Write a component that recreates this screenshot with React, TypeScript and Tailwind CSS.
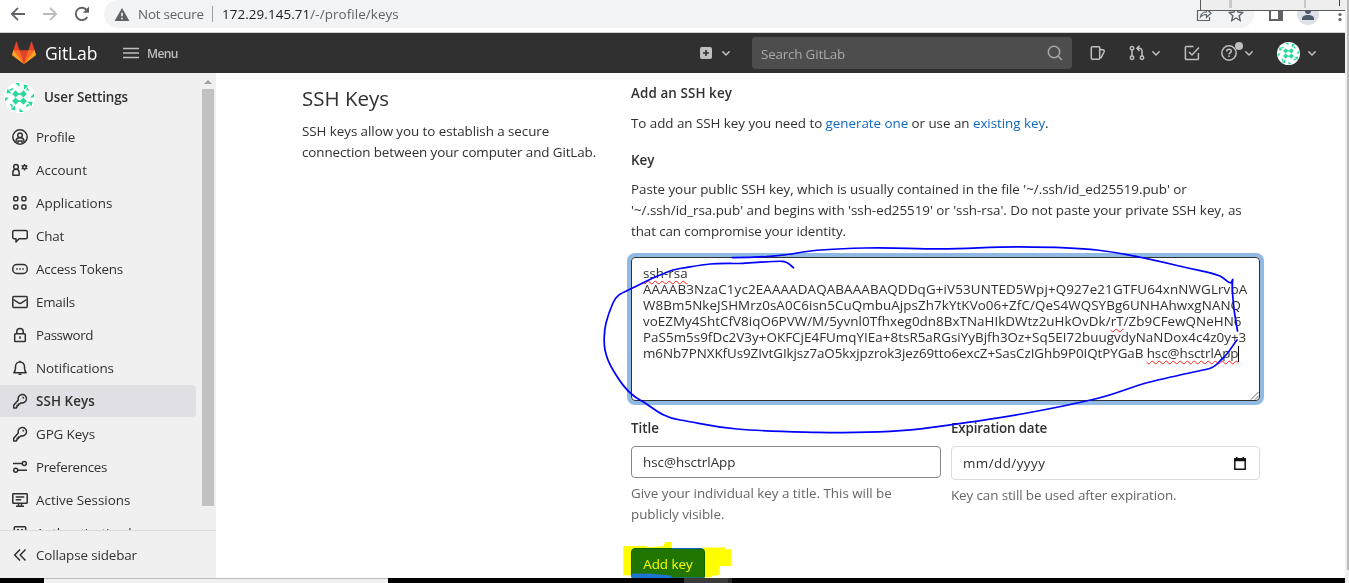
import React from "react";

type IconProps = { children: React.ReactNode; className?: string };

function Icon({ children, className = "size-4" }: IconProps) {
  return (
    <svg viewBox="0 0 16 16" fill="none" stroke="currentColor" strokeWidth="1.5" className={`${className} shrink-0`}>
      {children}
    </svg>
  );
}

function Chevron({ className = "" }: { className?: string }) {
  return (
    <svg viewBox="0 0 8 5" className={`h-[5px] w-2 shrink-0 ${className}`} fill="none" stroke="#bfbfbf" strokeWidth="1.5" strokeLinecap="round" strokeLinejoin="round">
      <path d="M.8.8 4 4 7.2.8" />
    </svg>
  );
}

function Identicon({ className }: { className: string }) {
  return (
    <svg viewBox="0 0 32 32" className={`shrink-0 rounded-full bg-white ${className}`}>
      <g fill="#28d99a">
        <path d="M12 8.6 15.6 12.4 12 16 8.4 12.4zM20 8.6 23.6 12.4 20 16 16.4 12.4zM12 16l3.6 3.6L12 23.4 8.4 19.6zM20 16l3.6 3.6L20 23.4 16.4 19.6z" />
        <rect x="14" y="11.5" width="4" height="1.6" />
        <rect x="14" y="19" width="4" height="1.6" />
        {[0, 90, 180, 270].map((angle) => (
          <g key={angle} transform={`rotate(${angle} 16 16)`}>
            <path d="M11.500 1h4.500v4zM20.500 2.500l4.500 1-4.500 4.500zM4 8.500 9.500 6 8.500 9z" />
          </g>
        ))}
      </g>
    </svg>
  );
}

function Tanuki() {
  return (
    <svg viewBox="0 0 36 36" className="size-6 shrink-0">
      <path fill="#e24329" d="M2 14l9.38 9v-9l-4-12.28c-.205-.632-1.176-.632-1.38 0z" />
      <path fill="#e24329" d="M34 14l-9.38 9v-9l4-12.28c.205-.632 1.176-.632 1.38 0z" />
      <path fill="#e24329" d="M18 34.38 3 14h30z" />
      <path fill="#fc6d26" d="M18 34.38 11.38 14H2l4 11z" />
      <path fill="#fc6d26" d="M18 34.38 24.62 14H34l-4 11z" />
      <path fill="#fca326" d="M2 14 .1 20.16c-.18.565 0 1.2.5 1.56l17.42 12.66z" />
      <path fill="#fca326" d="m34 14 1.9 6.16c.18.565 0 1.2-.5 1.56L18 34.38z" />
    </svg>
  );
}

const keyIcon = (
  <>
    <path d="M6.3 6.9A4.2 4.2 0 1 1 9.1 9.7L7.7 11H6.4v1.5H5V14l-.8.9H1.7v-2.7z" strokeLinejoin="round" />
    <circle cx="11.3" cy="4.7" r=".9" fill="currentColor" stroke="none" />
  </>
);

const items = [
  {
    label: "Profile",
    text: "tracking-[-0.2px]",
    icon: (
      <>
        <circle cx="8" cy="8" r="7.2" />
        <circle cx="8" cy="6.2" r="2.3" />
        <path d="M4 13.6v-1.4C4 10 5.6 8.7 8 8.7s4 1.3 4 3.5v1.4M6 14v-2h4v2" />
      </>
    ),
  },
  {
    label: "Account",
    text: "tracking-[0.06px]",
    icon: (
      <>
        <circle cx="4" cy="4.9" r="2.3" />
        <path d="M.9 10.5c0-2 1.3-3.2 3.1-3.2s3.1 1.2 3.1 3.2v2.8H.9z" strokeLinejoin="round" />
        <circle cx="12.5" cy="5.3" r="1.7" />
        <path d="M12.5 2v1.5M12.5 7.1v1.5M9.6 3.6l1.3.8M14.1 6.2l1.3.8M9.6 7l1.3-.8M14.1 4.4l1.3-.8" strokeWidth="1.3" />
      </>
    ),
  },
  {
    label: "Applications",
    text: "",
    icon: (
      <>
        <rect x="1.8" y="1.8" width="4" height="4" rx="1" />
        <rect x="9.9" y="1.8" width="4" height="4" rx="1" />
        <rect x="1.8" y="9.9" width="4" height="4" rx="1" />
        <rect x="9.9" y="9.9" width="4" height="4" rx="1" />
      </>
    ),
  },
  {
    label: "Chat",
    text: "tracking-[-0.2px]",
    icon: <path d="M2.2 2.5h11.6c.9 0 1.5.6 1.5 1.5v5.2c0 .9-.6 1.5-1.5 1.5H7L4 14v-3.3H2.2C1.3 10.7.7 10.1.7 9.2V4c0-.9.6-1.5 1.5-1.5z" strokeLinejoin="round" />,
  },
  {
    label: "Access Tokens",
    text: "tracking-[-0.2px]",
    icon: (
      <>
        <rect x=".8" y="3.5" width="14.4" height="9" rx="4" />
        <path d="M4.2 8h1.5M7.3 8h1.5M10.3 8h1.5" />
      </>
    ),
  },
  {
    label: "Emails",
    text: "tracking-[-0.25px]",
    icon: (
      <>
        <rect x=".8" y="2.6" width="14.4" height="10.8" rx="1" />
        <path d="m1.500 5.500 5 3.400c.9.6 2.100.6 3 0l5-3.400" />
      </>
    ),
  },
  {
    label: "Password",
    text: "tracking-[-0.42px]",
    icon: (
      <>
        <rect x="2.7" y="6.8" width="10.6" height="7.7" rx=".8" />
        <path d="M4.8 6.8V4.6a3.2 3.2 0 0 1 6.4 0v2.2M8 9.3V12" />
      </>
    ),
  },
  {
    label: "Notifications",
    text: "tracking-[-0.07px]",
    icon: (
      <>
        <path d="M1.8 12.7h12.4c-1.2-1.2-1.7-2.4-1.7-4.4V6.5a4.5 4.5 0 0 0-9 0v1.8c0 2-.5 3.2-1.7 4.4z" strokeLinejoin="round" />
        <path d="M8 2V.8M6.5 14.3h3" />
      </>
    ),
  },
  { label: "SSH Keys", text: "tracking-[0.08px] font-semibold", icon: keyIcon, active: true },
  { label: "GPG Keys", text: "tracking-[-0.1px]", icon: keyIcon },
  {
    label: "Preferences",
    text: "tracking-[-0.33px]",
    icon: (
      <>
        <circle cx="12.3" cy="4.4" r="2" />
        <circle cx="3.7" cy="11.3" r="2" />
        <path d="M1 4.4h9M6 11.3h9" />
      </>
    ),
  },
  {
    label: "Active Sessions",
    text: "",
    icon: (
      <>
        <rect x=".8" y="1.7" width="14.4" height="9.6" rx=".6" />
        <path d="M3.7 5h8.6M3.7 7.7h5.5M4 14.3h8M6.5 11.5v2.5M9.5 11.5v2.5" />
      </>
    ),
  },
  {
    label: "Authentication log",
    text: "tracking-[-0.2px]",
    icon: (
      <>
        <rect x="2.3" y="1.7" width="11.4" height="12.6" rx=".8" />
        <path d="M5 4.8h2M9 4.8h2M5 8h6" />
      </>
    ),
  },
];

function BrowserBar() {
  return (
    <header className="flex h-[33px] shrink-0 items-start overflow-hidden border-b border-[#d2d2d2] bg-white text-[#5f6368]">
      <div className="flex h-7 w-[104px] shrink-0 items-center gap-4 pl-[10px]">
        <Icon className="size-[16px]"><path d="M15 8H2M8 1.8 1.8 8 8 14.2" strokeWidth="1.8" /></Icon>
        <Icon className="size-[16px] text-[#b9bbbe]"><path d="M1 8h13M8 1.8 14.2 8 8 14.2" strokeWidth="1.8" /></Icon>
        <Icon className="size-[16px]"><path d="M13.3 11A6.2 6.2 0 1 1 13 4.3" strokeWidth="1.9" /><path d="M15 .6v6.2H8.8z" fill="currentColor" stroke="none" /></Icon>
      </div>
      <div className="flex h-7 w-[1150px] shrink-0 items-center rounded-full bg-[#f1f3f4] pl-[10px] text-[13.4px]">
        <svg viewBox="0 0 16 14" className="h-[13px] w-4"><path fill="#5f6368" d="M8 0l8 14H0z" /><path stroke="#f1f3f4" strokeWidth="1.7" d="M8 5v4M8 10.5v1.7" /></svg>
        <span className="ml-[8px] w-[66px] whitespace-nowrap tracking-[-0.2px]">Not secure</span>
        <span className="ml-2 h-4 w-px bg-[#9b9ea2]" />
        <span className="ml-[9px] whitespace-nowrap tracking-[0.09px]"><span className="text-[#202124]">172.29.145.71</span>/-/profile/keys</span>
        <div className="ml-auto flex items-center gap-4 pr-[10px]">
          <Icon className="size-4"><path d="M4 4.5H1.5v10h12V11M4.5 11c.5-3.5 2.5-5 6-5V3l4.5 4.3-4.5 4V8.5c-2.5 0-4.5.6-6 2.5z" strokeWidth="1.2" /></Icon>
          <Icon className="size-4"><path d="m8 1.5 2 4.5 4.8.5-3.600 3.200 1 4.800L8 12l-4.200 2.500 1-4.800L1.200 6.500 6 6z" strokeWidth="1.4" /></Icon>
        </div>
      </div>
      <div className="flex h-7 flex-1 items-center pl-[15px]">
        <svg viewBox="0 0 14 14" className="size-[14px] shrink-0"><path d="M1 1h12v12H1z" fill="none" stroke="#5f6368" strokeWidth="2" /><path fill="#5f6368" d="M9 1h4v12H9z" /></svg>
        <svg viewBox="0 0 22 22" className="ml-[14px] size-[22px] shrink-0"><circle cx="11" cy="11" r="11" fill="#dee1e6" /><circle cx="11" cy="8" r="3" fill="#4d5a6d" /><path d="M5 17v-1.500c0-2.500 3-3.500 6-3.500s6 1 6 3.500V17z" fill="#4d5a6d" /></svg>
        <svg viewBox="0 0 4 16" className="ml-[19px] h-4 w-1 shrink-0" fill="#5f6368"><circle cx="2" cy="3" r="1.6" /><circle cx="2" cy="8.5" r="1.6" /><circle cx="2" cy="13.5" r="1.6" /></svg>
      </div>
    </header>
  );
}

function NavBar() {
  return (
    <nav className="flex h-10 shrink-0 items-center bg-[#303030] pl-3 text-[#bfbfbf]">
      <Tanuki />
      <span className="ml-[9px] w-[54px] pt-px whitespace-nowrap text-[17.5px] tracking-[-0.1px] text-white">GitLab</span>
      <svg viewBox="0 0 16 12" className="ml-6 h-3 w-4 shrink-0"><path stroke="#bfbfbf" strokeWidth="1.3" d="M0 1.5h16M0 6h16M0 10.5h16" /></svg>
      <span className="ml-[8px] w-[37px] pt-[2px] whitespace-nowrap text-[12px] font-semibold tracking-[-0.6px]">Menu</span>
      <svg viewBox="0 0 12 12" className="ml-[516px] size-3 shrink-0"><rect width="12" height="12" rx="2" fill="#bfbfbf" /><path d="M6 3v6M3 6h6" stroke="#303030" strokeWidth="1.6" /></svg>
      <Chevron className="ml-[10px]" />
      <div className="ml-[22px] flex h-8 w-[320px] shrink-0 items-center justify-between rounded bg-[#4d4d4d] pr-[9px] pl-[9px] text-[13.4px] tracking-[-0.18px] text-[#a9a9a9]">
        <span className="pt-[2px]">Search GitLab</span>
        <Icon><circle cx="7" cy="7" r="5.7" /><path d="m11 11 4 4" /></Icon>
      </div>
      <Icon className="ml-[18px] size-4"><path d="M1.3 2.7c0-.5.4-.9.9-.9h6.6c.5 0 .9.4.9.9v10.6c0 .5-.4.9-.9.9H2.2c-.5 0-.9-.4-.9-.9zM9.700 4.300l3.600.7c.9.2 1.200.8.9 1.500l-3 6.200H9.700" strokeLinejoin="round" /></Icon>
      <Icon className="ml-[23px] size-4"><circle cx="3" cy="3.2" r="1.7" /><circle cx="3" cy="12.8" r="1.7" /><circle cx="13" cy="12.8" r="1.7" /><path d="M3 5v6M13 11V6c0-1.700-1-2.700-2.700-2.700H8M10.5.7 7.9 3.3l2.6 2.6" /></Icon>
      <Chevron className="ml-[7px]" />
      <Icon className="ml-[24px] size-4"><path d="M9.500 1.500H2.200c-.5 0-.8.3-.8.8v11.400c0 .5.3.8.8.8h11.400c.5 0 .8-.3.8-.8V8M5 7l3 3 7-7.500" /></Icon>
      <span className="relative ml-[21px] flex size-4 shrink-0">
        <Icon><circle cx="8" cy="8" r="7.2" /><path d="M5.7 6.5C5.700 5 6.700 4.200 8 4.200s2.300.8 2.300 2c0 1.600-2.300 1.700-2.300 3.300M8 10.500v1.500" /></Icon>
        <span className="absolute -top-[3px] left-[14px] size-2 rounded-full bg-[#bfbfbf]" />
      </span>
      <Chevron className="ml-[8px]" />
      <Identicon className="ml-[24px] size-[23px]" />
      <Chevron className="ml-[8px]" />
    </nav>
  );
}

function Sidebar() {
  return (
    <aside className="flex w-[216px] shrink-0 flex-col bg-[#f0f0f0] text-[13.4px] text-[#303030]">
      <div className="flex h-[457px] overflow-hidden">
        <div className="w-[200px] shrink-0">
          <div className="flex h-12 items-center pl-1">
            <Identicon className="size-[31px]" />
            <span className="ml-[9px] pt-px whitespace-nowrap font-semibold tracking-[-0.1px]">User Settings</span>
          </div>
          {items.map((item) => (
            <div key={item.label} className={`mb-px flex h-8 w-[196px] items-center rounded-r pl-3 ${item.active ? "bg-[#dfdfe5]" : ""}`}>
              <Icon>{item.icon}</Icon>
              <span className={`ml-2 whitespace-nowrap ${item.text}`}>{item.label}</span>
            </div>
          ))}
        </div>
        <div className="flex w-4 flex-col items-center">
          <svg viewBox="0 0 8 4" className="mt-[7px] h-1 w-2"><path d="M4 0l4 4H0z" fill="#a3a3a3" /></svg>
          <div className="mt-[5px] h-[417px] w-3 bg-[#c1c1c1]" />
        </div>
      </div>
      <div className="flex h-12 items-center border-t border-[#dbdbdb] pt-px pl-3">
        <Icon><path d="M8 2.5 2.7 8 8 13.5M13.5 2.5 8.2 8l5.300 5.500" /></Icon>
        <span className="ml-2 pt-px whitespace-nowrap tracking-[-0.12px]">Collapse sidebar</span>
      </div>
    </aside>
  );
}

const misspelled = "underline decoration-[#ff2020] decoration-wavy decoration-[1px] underline-offset-[2px] [text-decoration-skip-ink:none]";

function KeyForm() {
  return (
    <main className="flex flex-1 overflow-hidden bg-white pl-[86px] text-[13.4px] leading-[21px] whitespace-nowrap text-[#303030]">
      <section className="w-[329px] shrink-0">
        <h1 className="mt-[10px] h-[31px] text-[20.5px] leading-[30px] font-medium">SSH Keys</h1>
        <p className="mt-[7px] tracking-[-0.06px]">SSH keys allow you to establish a secure</p>
        <p className="tracking-[-0.09px]">connection between your computer and GitLab.</p>
      </section>
      <section className="w-[629px] shrink-0 pt-[10px]">
        <h2 className="font-semibold tracking-[0.1px]">Add an SSH key</h2>
        <p className="mt-[9px] tracking-[-0.04px]">
          To add an SSH key you need to <a className="text-[#1068bf]">generate one</a> or use an <a className="text-[#1068bf]">existing key</a>.
        </p>
        <div className="mt-4 font-semibold">Key</div>
        <p className="mt-2 tracking-[-0.035px]">Paste your public SSH key, which is usually contained in the file '~/.ssh/id_ed25519.pub' or</p>
        <p className="tracking-[-0.03px]">'~/.ssh/id_rsa.pub' and begins with 'ssh-ed25519' or 'ssh-rsa'. Do not paste your private SSH key, as</p>
        <p className="tracking-[-0.1px]">that can compromise your identity.</p>
        <div className="mt-[15px] flex h-[144px] justify-between rounded border border-[#303030] pt-[7px] pl-[11px] leading-4 ring-4 ring-[#90bae3]">
          <div>
            <div><span className={misspelled}>ssh-rsa</span></div>
            <div className="tracking-[0.135px]">AAAAB3NzaC1yc2EAAAADAQABAAABAQDDqG+iV53UNTED5Wpj+Q927e21GTFU64xnNWGLrvbA</div>
            <div className="tracking-[0.085px]">W8Bm5NkeJSHMrz0sA0C6isn5CuQmbuAjpsZh7kYtKVo06+ZfC/QeS4WQSYBg6UNHAhwxgNANQ</div>
            <div className="tracking-[0.045px]">voEZMy4ShtCfV8iqO6PVW/M/5yvnl0Tfhxeg0dn8BxTNaHIkDWtz2uHkOvDk/<span className={misspelled}>rT</span>/Zb9CFewQNeHN6</div>
            <div className="tracking-[0.035px]">PaS5m5s9fDc2V3y+OKFCjE4FUmqYIEa+8tsR5aRGsiYyBjfh3Oz+Sq5EI72buugvdyNaNDox4c4z0y+3</div>
            <div className="flex whitespace-pre tracking-[-0.06px]">m6Nb7PNXKfUs9ZIvtGIkjsz7aO5kxjpzrok3jez69tto6excZ+SasCzIGhb9P0IQtPYGaB <span className={misspelled}>hsc@hsctrlApp</span><span className="mt-px h-4 w-px bg-black" /></div>
          </div>
          <svg viewBox="0 0 10 10" className="size-[9px] shrink-0 self-end"><path d="M1 9.500 9.500 1M5.500 9.500l4-4" stroke="#555" /></svg>
        </div>
        <div className="mt-[17px] flex gap-[10px]">
          <div className="w-[310px]">
            <div className="font-semibold">Title</div>
            <div className="mt-[7px] flex h-8 items-center rounded border border-[#868686] pl-[11px]">hsc@hsctrlApp</div>
            <p className="mt-[5px] tracking-[-0.02px] text-[#666]">Give your individual key a title. This will be<br />publicly visible.</p>
          </div>
          <div className="w-[309px]">
            <div className="font-semibold tracking-[-0.18px]">Expiration date</div>
            <div className="mt-[7px] flex h-[34px] items-center justify-between rounded border border-[#dbdbdb] pr-[13px] pl-[11px] tracking-[0.45px]">
              mm/dd/yyyy
              <svg viewBox="0 0 12 13" className="h-[13px] w-3"><path d="M.8 2h10.400v10.200H.8z" fill="none" stroke="#111" strokeWidth="1.500" /><path d="M0 1.300h12v3H0zM2 0h1.500v2H2zM8.500 0H10v2H8.500z" fill="#111" /></svg>
            </div>
            <p className="mt-[5px] tracking-[-0.1px] text-[#666]">Key can still be used after expiration.</p>
          </div>
        </div>
        <button className="mt-[23px] flex h-8 w-[74px] items-center justify-center rounded border border-[#1064bb] bg-[#1f75cb] font-medium text-white">Add key</button>
      </section>
    </main>
  );
}

function Annotations() {
  return (
    <>
      <svg viewBox="620 538 120 40" className="pointer-events-none absolute top-[538px] left-[620px] h-10 w-[120px] mix-blend-multiply">
        <path fill="#ffff00" d="M623.300 546h23.400v1.500l16.600-1.500 2-4h6.400v7h29l4-1.500h20.300v1.700h6v16.700h-11.700v9l-7.600 1v1l-6.700.700h-33.700v-2l-21.300-2h-18.300v1.700h-8.400z" />
      </svg>
      <svg viewBox="0 0 1349 583" fill="none" stroke="#0000ff" strokeWidth="1.7" strokeLinecap="round" strokeLinejoin="round" className="pointer-events-none absolute inset-0 h-[583px] w-[1349px]">
        <path d="M732.500 257.700C748 257.600 757 257.200 767 256.500S785 255.500 800 252.500 835 248.700 865 248 910 248.800 940 248.800 990 246.700 1020 246.900 1075 247.500 1097 250 1150 259 1177 265.500 1207 271 1220 276C1226 279 1227 283 1231 283L1232.700 279.500C1231.500 290 1233 300 1234.500 313L1237.500 331" />
        <path d="M1237 340C1232 346 1229 353 1223 358S1217 367 1208 369 1170 377 1150 382 1120 393 1097 398.500 1060 407 1027 413 965 423 930 427.700 850 433 817 432.300 765 431.500 737 429 700 423 680 420 653 407 640 400 619 380 613 370 606 355 605 350 603.500 333 606 323 609 312 613 303 622 293 632 288.300 650 279 660 275 670 270 680 268.500 700 265 710 264 735 263.800 743 263.300 775 261 782 261.300 790 265.500 793.500 267.700" />
      </svg>
      <div className="absolute top-0 left-[1200px] flex h-[11px] w-[145px] border-b border-l border-[#5a5a5a] bg-[#eeeeee]">
        <span className="ml-7 h-2 w-[3px] bg-[#c8c8c8]" />
        <span className="ml-[72px] h-2 w-[2px] bg-[#c8c8c8]" />
        <span className="ml-[33px] h-[6px] w-px bg-[#444]" />
      </div>
    </>
  );
}

export default function App() {
  return (
    <div className="relative flex h-[583px] w-[1349px] overflow-hidden bg-white font-['Open_Sans','Noto_Sans',sans-serif]">
      <div className="flex w-[1345px] shrink-0 flex-col">
        <BrowserBar />
        <NavBar />
        <div className="flex h-[505px] shrink-0">
          <Sidebar />
          <KeyForm />
        </div>
        <div className="z-10 flex h-[5px] shrink-0 bg-black">
          <span className="ml-11 w-[344px] border-t border-[#bcbcbc] bg-[#f0f0f0]" />
          <span className="ml-[296px] w-12 border-r-4 border-[#252525] bg-[#3a3a3a]" />
        </div>
      </div>
      <div className="flex w-1 shrink-0 flex-col bg-[#f0f0f0]">
        <div className="ml-[2px] h-[570px] w-[2px] bg-[#bcbcbc]" />
      </div>
      <Annotations />
    </div>
  );
}
